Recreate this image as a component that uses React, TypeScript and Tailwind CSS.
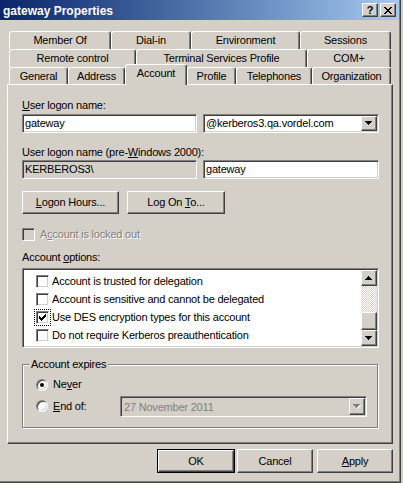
import React from 'react';

const raised =
  'border border-t-white border-l-white border-r-[#404040] border-b-[#404040] shadow-[inset_-1px_-1px_0_#808080] bg-[#d4d0c8]';
const sunken =
  'border border-t-[#808080] border-l-[#808080] border-r-white border-b-white shadow-[inset_1px_1px_0_#404040,inset_-1px_-1px_0_#d4d0c8]';
const tabEdge =
  'bg-[#d4d0c8] border-t border-l border-r border-t-white border-l-white border-r-[#404040] shadow-[inset_-1px_0_0_#808080] rounded-t-[3px]';

type TabDef = { label: string; w: string; on?: boolean };

const tabRows: { h: string; tabs: TabDef[] }[] = [
  {
    h: 'h-[18px]',
    tabs: [
      { label: 'Member Of', w: 'w-[102px]' },
      { label: 'Dial-in', w: 'w-[80px]' },
      { label: 'Environment', w: 'w-[109px]' },
      { label: 'Sessions', w: 'w-[91px]' },
    ],
  },
  {
    h: 'h-[18px]',
    tabs: [
      { label: 'Remote control', w: 'w-[127px]' },
      { label: 'Terminal Services Profile', w: 'w-[171px]' },
      { label: 'COM+', w: 'w-[84px]' },
    ],
  },
  {
    h: 'h-[17px]',
    tabs: [
      { label: 'General', w: 'w-[59px]' },
      { label: 'Address', w: 'w-[57px]' },
      { label: 'Account', w: 'w-[62px]', on: true },
      { label: 'Profile', w: 'w-[49px]' },
      { label: 'Telephones', w: 'w-[76px]' },
      { label: 'Organization', w: 'w-[79px]' },
    ],
  },
];

const options = [
  { label: 'Account is trusted for delegation' },
  { label: 'Account is sensitive and cannot be delegated' },
  { label: 'Use DES encryption types for this account', checked: true, focus: true },
  { label: 'Do not require Kerberos preauthentication' },
];

function Arrow({ dir, disabled }: { dir: 'up' | 'down'; disabled?: boolean }) {
  const d =
    dir === 'down'
      ? 'M0 0h7v1H0zM1 1h5v1H1zM2 2h3v1H2zM3 3h1v1H3z'
      : 'M3 0h1v1H3zM2 1h3v1H2zM1 2h5v1H1zM0 3h7v1H0z';
  return (
    <svg width="8" height="5" viewBox="0 0 8 5" shapeRendering="crispEdges">
      {disabled && <path d={d} fill="#fff" transform="translate(1 1)" />}
      <path d={d} fill={disabled ? '#808080' : '#000'} />
    </svg>
  );
}

function Check({ checked, disabled, focus }: { checked?: boolean; disabled?: boolean; focus?: boolean }) {
  return (
    <div
      className={`w-[13px] h-[13px] shrink-0 flex items-center justify-center ${sunken} ${
        disabled ? 'bg-[#d4d0c8]' : 'bg-white'
      } ${focus ? 'outline-1 outline-dotted outline-black outline-offset-[1px]' : ''}`}
    >
      {checked && (
        <svg width="7" height="7" viewBox="0 0 7 7" shapeRendering="crispEdges">
          <path d="M0 2h1v3H0zM1 3h1v3H1zM2 4h1v3H2zM3 3h1v3H3zM4 2h1v3H4zM5 1h1v3H5zM6 0h1v3H6z" fill="#000" />
        </svg>
      )}
    </div>
  );
}

function Radio({ on }: { on?: boolean }) {
  return (
    <div className="w-[12px] h-[12px] shrink-0 rounded-full bg-white border border-t-[#808080] border-l-[#808080] border-r-white border-b-white shadow-[inset_1px_1px_0_#404040,inset_-1px_-1px_0_#d4d0c8] flex items-center justify-center">
      {on && <div className="w-[4px] h-[4px] rounded-full bg-black" />}
    </div>
  );
}

function Tab({ t }: { t: TabDef }) {
  if (t.on) {
    return (
      <div className={`${t.w} h-[21px] -mb-[1px] relative z-10 flex justify-center pt-[2px] ${tabEdge}`}>
        {t.label}
      </div>
    );
  }
  return <div className={`${t.w} h-full flex items-center justify-center ${tabEdge}`}>{t.label}</div>;
}

export default function App() {
  return (
    <div className="w-[403px] h-[483px] bg-[#d4d0c8] flex font-['Liberation_Sans',Arial,sans-serif] text-[11px] leading-[13px] tracking-[-0.2px] text-black overflow-hidden">
      <div className="w-[401px] h-[483px] flex flex-col shadow-[inset_-1px_-1px_0_#404040,inset_-2px_-2px_0_#808080]">
        {/* title bar */}
        <div className="h-[20px] mr-[2px] bg-linear-to-r from-[#0a246a] to-[#a6caf0] flex items-center pl-[3px] pr-[3px]">
          <span className="flex-1 text-white font-bold text-[12px] tracking-normal pt-[2px]">gateway Properties</span>
          <div className={`w-[16px] h-[14px] ${raised} flex items-center justify-center font-bold text-[11px] leading-none tracking-normal`}>
            ?
          </div>
          <div className={`w-[16px] h-[14px] ml-[2px] ${raised} flex items-center justify-center`}>
            <svg width="8" height="7" viewBox="0 0 8 7" shapeRendering="crispEdges">
              <path
                d="M0 0h2v1H0zM6 0h2v1H6zM1 1h2v1H1zM5 1h2v1H5zM2 2h4v1H2zM3 3h2v1H3zM2 4h4v1H2zM1 5h2v1H1zM5 5h2v1H5zM0 6h2v1H0zM6 6h2v1H6z"
                fill="#000"
              />
            </svg>
          </div>
        </div>

        {/* tabs */}
        <div className="mt-[11px] ml-[9px] flex flex-col">
          {tabRows.map((row, i) => (
            <div key={i} className={`${row.h} flex items-end`}>
              {row.tabs.map((t) => (
                <Tab key={t.label} t={t} />
              ))}
            </div>
          ))}
        </div>

        {/* page */}
        <div className="ml-[7px] w-[386px] h-[360px] border border-t-white border-l-white border-r-[#404040] border-b-[#404040] shadow-[inset_-1px_-1px_0_#808080] pl-[14px] pt-[14px] flex flex-col">
          <div>
            <u>U</u>ser logon name:
          </div>
          <div className="mt-[2px] flex gap-[6px]">
            <div className={`w-[175px] h-[19px] ${sunken} bg-white pl-[2px] pt-[2px]`}>gateway</div>
            <div className={`w-[176px] h-[19px] ${sunken} bg-white p-[1px] flex`}>
              <span className="flex-1 pl-[1px] pt-[1px]">@kerberos3.qa.vordel.com</span>
              <div className={`w-[16px] h-full ${raised} flex items-center justify-center`}>
                <Arrow dir="down" />
              </div>
            </div>
          </div>

          <div className="mt-[13px]">
            User logon name (pre-<u>W</u>indows 2000):
          </div>
          <div className="mt-[1px] flex gap-[6px]">
            <div className={`w-[175px] h-[19px] ${sunken} bg-[#d4d0c8] pl-[2px] pt-[2px]`}>KERBEROS3\</div>
            <div className={`w-[176px] h-[19px] ${sunken} bg-white pl-[2px] pt-[2px]`}>gateway</div>
          </div>

          <div className="mt-[12px] flex gap-[8px]">
            <div className={`w-[97px] h-[23px] ${raised} flex items-center justify-center`}>
              <span>
                <u>L</u>ogon Hours...
              </span>
            </div>
            <div className={`w-[98px] h-[23px] ${raised} flex items-center justify-center`}>
              <span>
                Log On <u>T</u>o...
              </span>
            </div>
          </div>

          <div className="mt-[14px] h-[13px] flex items-center gap-[5px]">
            <Check disabled />
            <span className="text-[#808080] [text-shadow:1px_1px_0_#fff]">
              A<u>c</u>count is locked out
            </span>
          </div>

          <div className="mt-[10px]">
            Account <u>o</u>ptions:
          </div>
          <div className={`mt-[4px] w-[357px] h-[80px] ${sunken} bg-white p-[1px] flex`}>
            <div className="flex-1 pl-[12px] pt-[2px] flex flex-col">
              {options.map((o) => (
                <div key={o.label} className="h-[18px] flex items-center gap-[3px]">
                  <Check checked={o.checked} focus={o.focus} />
                  <span>{o.label}</span>
                </div>
              ))}
            </div>
            <div className="w-[16px] flex flex-col">
              <div className={`h-[16px] ${raised} flex items-center justify-center`}>
                <Arrow dir="up" />
              </div>
              <div className="h-[26px] bg-[image:repeating-conic-gradient(#ffffff_0_25%,#d4d0c8_0_50%)] bg-[length:2px_2px]" />
              <div className={`h-[18px] ${raised}`} />
              <div className={`h-[16px] ${raised} flex items-center justify-center`}>
                <Arrow dir="down" />
              </div>
            </div>
          </div>

          <fieldset className="mt-[10px] w-[356px] border border-[#808080] shadow-[1px_1px_0_#fff,inset_1px_1px_0_#fff]">
            <legend className="ml-[6px] px-[2px] bg-[#d4d0c8]">Account expires</legend>
            <div className="pl-[13px] pt-[7px] pb-[10px] flex flex-col">
              <div className="h-[13px] flex items-center gap-[5px]">
                <Radio on />
                <span>
                  Ne<u>v</u>er
                </span>
              </div>
              <div className="mt-[4px] h-[22px] flex items-center">
                <Radio />
                <span className="ml-[5px] w-[67px]">
                  <u>E</u>nd of:
                </span>
                <div className={`w-[247px] h-[21px] ${sunken} bg-[#d4d0c8] p-[1px] flex`}>
                  <span className="flex-1 pl-[2px] pt-[3px] text-[#808080]">27 November 2011</span>
                  <div className={`w-[16px] h-full ${raised} flex items-center justify-center`}>
                    <Arrow dir="down" disabled />
                  </div>
                </div>
              </div>
            </div>
          </fieldset>
        </div>

        {/* dialog buttons */}
        <div className="mt-[5px] mr-[8px] flex justify-end">
          <div className="w-[78px] h-[24px] border border-black">
            <div className={`w-full h-full ${raised} flex items-center justify-center`}>OK</div>
          </div>
          <div className={`ml-[2px] w-[76px] h-[24px] ${raised} flex items-center justify-center`}>Cancel</div>
          <div className={`ml-[4px] w-[76px] h-[24px] ${raised} flex items-center justify-center`}>
            <span>
              <u>A</u>pply
            </span>
          </div>
        </div>
      </div>
    </div>
  );
}
